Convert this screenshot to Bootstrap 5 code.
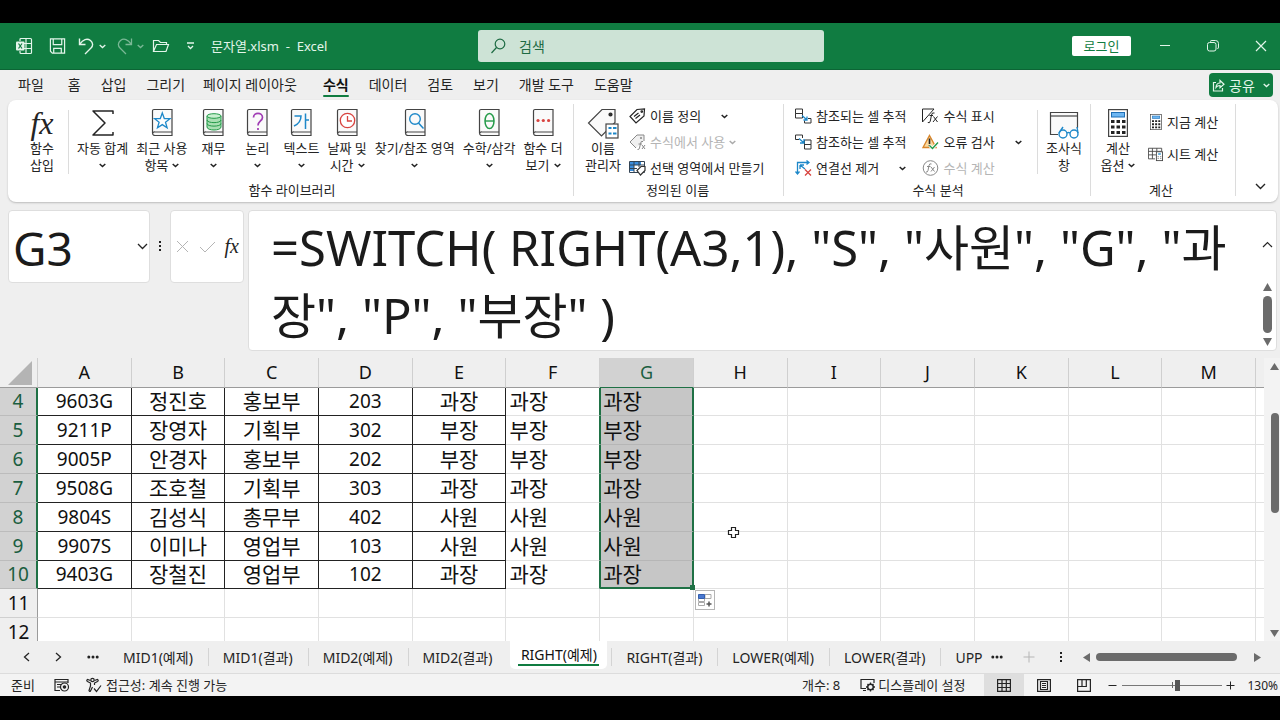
<!DOCTYPE html>
<html lang="ko">
<head>
<meta charset="utf-8">
<meta name="viewport" content="width=device-width, initial-scale=1">
<title>문자열.xlsm - Excel</title>
<link href="https://cdn.jsdelivr.net/npm/bootstrap@5.3.0/dist/css/bootstrap.min.css" rel="stylesheet">
<style>
  :root { --xl: #107c41; --ink: #242424; --chrome: #efefef; --line: #e1e1e1; }
  body { font-family: "Noto Sans", "Noto Sans CJK KR", sans-serif; font-size: 13px; line-height: 17px; color: var(--ink); background: #000; padding: 23px 0 24px; height: 100vh; overflow: hidden; }
  button { color: inherit; background: none; border: 0; padding: 0; }
  svg { display: block; flex: none; fill: none; stroke: currentColor; }
  .app { background: var(--chrome); }
  .fx { font-family: "Liberation Serif", serif; font-style: italic; }
  .fx-big { font-size: 32px; }
  .fx-mid { font-size: 20px; }

  /* title bar */
  .titlebar { display: grid; grid-template-columns: 478fr 346fr 456fr; height: 47px; background: var(--xl); color: #e3f5ea; border-bottom: 1px solid #0c6535; }
  .quick { padding-left: 16px; }
  .quick .chev, .share .chev { stroke: #e3f5ea; stroke-width: 1.3; }
  .undo { margin-left: 12px; }
  .redo { margin-left: 10px; }
  .searchbox { height: 32px; background: #cde3d6; color: #1d6b43; border-radius: 3px; padding: 0 13px; gap: 13px; }
  .searchbox input { background: none; border: 0; outline: 0; padding: 0; width: 100%; color: inherit; font-size: 14px; }
  .searchbox input::placeholder { color: #1d6b43; opacity: 1; }
  .winctl { padding-right: 13px; gap: 36px; }
  .login { background: #fff; color: var(--xl); width: 59px; height: 20px; border-radius: 2px; margin-right: -8px; }

  /* ribbon */
  .menu { height: 30px; padding: 0 7px 0 8px; font-size: 14px; }
  .menu a { color: var(--ink); text-decoration: none; padding: 6px 10px 0; line-height: 17px; }
  .menu a.active { font-weight: 700; color: #111; }
  .menu a.active::after { content: ""; display: block; height: 2px; margin-top: 2px; background: var(--xl); border-radius: 1px; }
  .share { background: var(--xl); color: #e3f5ea; height: 24px; width: 64px; border-radius: 4px; gap: 4px; margin-top: 3px; }
  .ribbon { margin: 0 2px 0 8px; height: 102px; background: #fff; border-radius: 8px; box-shadow: 0 1px 2px #bbb; }
  .rgroup { position: relative; padding-top: 6px; }
  .rgroup + .rgroup::before, .vend::before { content: ""; position: absolute; left: 0; top: 4px; bottom: 6px; width: 1px; background: #dcdcdc; }
  .g-lib { width: 565px; padding-left: 12px; }
  .g-names { width: 210px; padding-left: 8px; }
  .g-audit { width: 307px; padding-left: 12px; }
  .g-calc { width: 145px; padding-left: 6px; }
  .rlabel { text-align: center; height: 24px; line-height: 24px; margin-top: auto; padding-right: 9px; }
  .big { display: flex; flex-direction: column; align-items: center; min-width: 44px; padding: 0 4px; white-space: nowrap; height: 68px; }
  .big .pic { height: 35px; display: flex; align-items: center; }
  .big .ch { height: 17px; display: flex; align-items: center; }
  .stack { margin: -3px 0 -7px; }
  .small-row { display: flex; align-items: center; gap: 4px; height: 26px; white-space: nowrap; }
  .small-row.tall { height: 32px; }
  .off { color: #b5b5b5; }
  .vsep { width: 1px; height: 64px; margin-top: 4px; background: #dcdcdc; }
  .chev { width: 7px; height: 5px; stroke: #222; stroke-width: 1.5; }
  .off .chev { stroke: #aaa; }

  /* formula bar */
  .fbar { padding: 8px 3px 7px 8px; }
  .fpane { background: #fff; border: 1px solid #dedede; border-radius: 4px; }
  .namebox { width: 142px; height: 73px; padding-left: 4px; }
  .namebox input { width: 120px; border: 0; outline: 0; padding: 3px 0 0; font-size: 46px; color: #1b1b1b; background: none; }
  .fbtns { width: 74px; height: 73px; }
  .formula { height: 141px; }
  .formula textarea { flex: 1; border: 0; outline: 0; resize: none; overflow: hidden; padding: 2px 0 0 22px; font-size: 49px; line-height: 68px; color: #1b1b1b; background: none; }
  .fscroll { width: 17px; }
  .fscroll .thumb { width: 9px; height: 37px; margin: 5px 0; }
  .thumb { background: #6b6b6b; border-radius: 5px; }
  .arr { fill: #6b6b6b; stroke: none; }
  .dots { fill: #222; stroke: none; }

  /* sheet */
  .sheet { flex: 1; min-height: 0; overflow: hidden; }
  .cells { table-layout: fixed; width: 100%; border-collapse: separate; border-spacing: 0; font-size: 21px; line-height: 27px; color: #111; }
  .cells th, .cells td { padding: 0; height: 29px; white-space: nowrap; font-weight: 400; background: #fff; border-right: 1px solid var(--line); border-bottom: 1px solid var(--line); }
  .cells thead th { height: 30px; background: var(--chrome); border-right-color: #cfcfcf; border-bottom-color: #9b9b9b; text-align: center; font-size: 18px; }
  .cells tbody th { background: var(--chrome); border-bottom-color: #d0d0d0; border-right-color: #9b9b9b; text-align: center; font-size: 19px; }
  .cells .short > * { height: 28px; }
  .cells tbody th.on { background: #d2d2d2; color: #1b5e3f; border-right: 2px solid #1f7145; border-bottom-color: #bcbcbc; }
  .cells thead th.on { background: #d2d2d2; color: #1b5e3f; border-bottom: 1px solid #1f7145; }
  .cells td.bx { border-color: #222; text-align: center; }
  .cells td.num { font-size: 19px; }
  .cells td.lf { padding-left: 3px; }
  .cells td.pre { border-right-color: #1f7145; }
  .cells td.sel { background: #c6c6c6; border-right: 2px solid #1f7145; border-bottom-color: #b6b6b6; border-left: 1px solid #1f7145; padding-left: 2px; }
  .cells td.last { border-bottom: 2px solid #1f7145; line-height: 26px; }
  .cells td.bare { border-right: 0; }
  .corner { fill: #b4b4b4; stroke: none; }
  .knob { position: absolute; right: -3px; bottom: -3px; width: 5px; height: 5px; background: #1f7145; }
  .autofill { position: absolute; left: 100%; top: 100%; margin: 3px 0 0 3px; width: 20px; height: 20px; background: #fff; border: 1px solid #b5b5b5; z-index: 2; }
  .pointer { position: absolute; left: 33px; top: -6px; z-index: 2; }
  .vscroll { flex: none; width: 16px; background: #f3f3f3; padding: 5px 1px 4px 0; }
  .vscroll .thumb { width: 8px; height: 100px; margin-top: 43px; }

  /* sheet tabs, status bar */
  .tabs { height: 32px; font-size: 14px; }
  .tabnav { width: 108px; padding-left: 23px; gap: 25px; }
  .tabs .tab { color: var(--ink); text-decoration: none; padding: 7px 15px 0; white-space: nowrap; position: relative; line-height: 19px; }
  .tabs .tab + .tab::before { content: ""; position: absolute; left: 0; top: 7px; height: 18px; width: 1px; background: #d4d4d4; }
  .tabs .tab.active { background: #fff; height: 28px; min-width: 97px; text-align: center; border-radius: 0 0 5px 5px; padding: 4px 8px 0; margin: 0 4px 0 3px; color: #111; }
  .tabs .tab.active::before { display: none; }
  .tabs .tab.active::after { content: ""; display: block; height: 2px; background: var(--xl); }
  .newtab { margin: 0 25px 0 20px; }
  .hscroll { width: 178px; margin: 0 19px 0 20px; }
  .hscroll .thumb { height: 8px; margin: 0 17px 0 6px; }
  .status { height: 23px; background: #f3f3f3; border-top: 1px solid #dcdcdc; }
  .state { margin: 0 19px 0 11px; }
  .macro { margin-right: 16px; }
  .display { margin: 0 19px 0 20px; gap: 3px; }
  .view { width: 40px; height: 22px; display: flex; align-items: center; justify-content: center; }
  .view.active { background: #dedede; }
  .zoom { position: relative; width: 100px; height: 22px; }
  .zoom::before { content: ""; position: absolute; left: 50px; top: 8px; width: 1px; height: 6px; background: #666; }
  .zoom input { display: block; width: 100%; height: 22px; margin: 0; appearance: none; -webkit-appearance: none; background: none; }
  .zoom input::-webkit-slider-runnable-track { height: 1px; background: #777; }
  .zoom input::-webkit-slider-thumb { -webkit-appearance: none; width: 5px; height: 11px; margin-top: -5px; background: #555; }
  .zoomout { margin: 0 5px 0 4px; }
  .zoomin { margin: 0 12px 0 4px; }
  .pct { font-size: 12px; margin-right: 2px; }
</style>
</head>
<body>
<svg width="0" height="0" class="position-absolute" aria-hidden="true">
  <symbol id="chev" viewBox="0 0 7 5"><path d="M.7 1l2.800 2.600L6.300 1"/></symbol>
  <symbol id="book" viewBox="0 0 22 30"><path d="M3 1.500h18v26H4a2.500 2.500 0 0 1-2.500-2.500V3A1.500 1.500 0 0 1 3 1.500zM21 24H4a2 2 0 0 0-2.500 1.500" fill="#fafafa" stroke="#444" stroke-width="1.200"/></symbol>
  <symbol id="calc" viewBox="0 0 20 28"><rect x=".6" y=".6" width="18.800" height="26.800" fill="#fff" stroke="#444" stroke-width="1.200"/><rect x="3.500" y="3.500" width="13" height="4.500" fill="#6db6f2" stroke="#1f6fb5"/><path d="M3 12.500h3.500m2 0H12m2 0h3.500M3 18h3.500m2 0H12m2 0h3.500M3 23.500h3.500m2 0H12m2 0h3.500" stroke="#222" stroke-width="3.200"/></symbol>
</svg>

<div class="app d-flex flex-column h-100">
  <header class="titlebar align-items-center">
    <div class="quick d-flex align-items-center">
      <svg width="17" height="18" viewBox="0 0 17 18" stroke-width="1.200"><path d="M4 4V2.500Q4 1.500 5 1.500h9.500q1 0 1 1v13q0 1-1 1H5q-1 0-1-1V14M10 1.500v15M8 6.500h7.500M8 11.500h7.500"/><rect x="0" y="4.500" width="8.500" height="9" rx="1" fill="#e3f5ea" stroke="none"/><path d="M2.500 6.500l3.500 5M6 6.500l-3.500 5" stroke="#107c41"/></svg>
      <button type="button" aria-label="저장" class="ms-3"><svg width="17" height="18" viewBox="0 0 18 18" stroke-width="1.300"><path d="M1.500 1.500h15v15h-13l-2-2zM4.500 1.500v6h9v-6M5 16.500v-5h8v5"/></svg></button>
      <button type="button" aria-label="실행 취소" class="undo d-flex align-items-center gap-1"><svg width="17" height="18" viewBox="0 0 17 18" stroke-width="1.400"><path d="M1.500 1.500v6h6M1.800 7.200C5 2.500 9 .8 12.500 3.500c3 2.500 2.500 5.500.5 7.500l-6 6"/></svg><svg class="chev"><use href="#chev"/></svg></button>
      <button type="button" aria-label="다시 실행" class="redo d-flex align-items-center gap-1 opacity-50"><svg width="17" height="18" viewBox="0 0 17 18" stroke-width="1.300"><path d="M15.500 1.500v6h-6M15.200 7.200C12 2.500 8 .8 4.500 3.500c-3 2.500-2.500 5.500-.5 7.500l6 6"/></svg><svg class="chev"><use href="#chev"/></svg></button>
      <button type="button" aria-label="열기" class="ms-2"><svg width="18" height="14" viewBox="0 0 18 14" stroke-width="1.200"><path d="M1.500 12.500v-11h5l2 2h6v2M1.500 12.500l3-7h12l-2.500 7z"/></svg></button>
      <button type="button" aria-label="빠른 실행 도구 모음" class="ms-3"><svg width="9" height="8" viewBox="0 0 9 8"><path d="M1 1h7M2 4l2.500 2.500L7 4" stroke-width="1.300"/></svg></button>
      <span class="text-nowrap ms-3">문자열.xlsm&nbsp; -&nbsp; Excel</span>
    </div>
    <label class="searchbox d-flex align-items-center">
      <svg width="15" height="16" viewBox="0 0 15 16" stroke-width="1.200"><circle cx="9" cy="6" r="4.800"/><path d="M5.500 9.500L.5 15"/></svg>
      <input type="search" placeholder="검색" aria-label="검색">
    </label>
    <div class="winctl d-flex align-items-center justify-content-end">
      <button type="button" class="login">로그인</button>
      <button type="button" aria-label="최소화"><svg width="12" height="12" viewBox="0 0 12 12"><path d="M1 5.500h10"/></svg></button>
      <button type="button" aria-label="이전 크기로"><svg width="12" height="12" viewBox="0 0 12 12"><rect x=".5" y="2.500" width="8.500" height="8.500" rx="2"/><path d="M3 1.500Q4 .5 5 .5h3.500q3 0 3 3V7q0 1-1 2"/></svg></button>
      <button type="button" aria-label="닫기"><svg width="12" height="12" viewBox="0 0 12 12" stroke-width="1.200"><path d="M1 1l10 10M11 1L1 11"/></svg></button>
    </div>
  </header>

  <nav class="menu d-flex align-items-start">
    <a href="#" class="me-1">파일</a><a href="#">홈</a><a href="#">삽입</a><a href="#">그리기</a><a href="#" class="px-2">페이지 레이아웃</a><a href="#" class="active ms-2">수식</a><a href="#">데이터</a><a href="#">검토</a><a href="#">보기</a><a href="#">개발 도구</a><a href="#">도움말</a>
    <button type="button" class="share ms-auto d-flex align-items-center justify-content-center"><svg width="13" height="13" viewBox="0 0 13 13" stroke-width="1.200"><path d="M4 3.500H1.500v8.500h9V9M4 8.500C4 5.500 6 4 8 4V1.500l4 3.800-4 3.500V6.500C6.500 6.500 5 7 4 8.500z"/></svg>공유<svg class="chev ms-1"><use href="#chev"/></svg></button>
  </nav>

  <section class="ribbon d-flex" aria-label="수식">
    <div class="rgroup g-lib d-flex flex-column">
      <div class="d-flex">
        <button type="button" class="big"><span class="pic fx fx-big">fx</span><span>함수<br>삽입</span></button>
        <span class="vsep ms-1"></span>
        <button type="button" class="big ms-1"><span class="pic"><svg width="22" height="26" viewBox="0 0 22 26" stroke-width="1.500"><path d="M21 4V1H1l12 12L1 25h20v-3" stroke-linejoin="round"/></svg></span><span>자동 합계</span><span class="ch"><svg class="chev"><use href="#chev"/></svg></span></button>
        <button type="button" class="big"><span class="pic"><svg width="22" height="30"><use href="#book"/><path d="M11.300 5l2 5.500 5.700.2-4.500 3.500 1.600 5.600-4.800-3.200-4.800 3.200 1.600-5.600-4.500-3.500 5.700-.2z" stroke="#1e88c9" stroke-width="1.300" fill="#fff"/></svg></span><span>최근 사용</span><span class="d-flex align-items-center gap-1">항목 <svg class="chev"><use href="#chev"/></svg></span></button>
        <button type="button" class="big"><span class="pic"><svg width="22" height="30"><use href="#book"/><path d="M5 8v11c0 4 14 4 14 0V8" fill="#a9dfb3" stroke="#239a48"/><ellipse cx="12" cy="8" rx="7" ry="2.300" fill="#c9efcf" stroke="#239a48"/><path d="M5 12c0 3.500 14 3.500 14 0M5 15.500c0 3.500 14 3.500 14 0" stroke="#239a48"/></svg></span><span>재무</span><span class="ch"><svg class="chev"><use href="#chev"/></svg></span></button>
        <button type="button" class="big"><span class="pic"><svg width="22" height="30"><use href="#book"/><path d="M7.500 9.500c0-5.500 9-5.500 9 0 0 3.500-4.500 3.500-4.500 8m0 2.500v2" stroke="#a03cb4" stroke-width="1.700"/></svg></span><span>논리</span><span class="ch"><svg class="chev"><use href="#chev"/></svg></span></button>
        <button type="button" class="big"><span class="pic"><svg width="22" height="30"><use href="#book"/><path d="M4.500 8H11c0 5-2.500 8-7 10M15.500 5.500V21M15.500 12H19" stroke="#1e88c9" stroke-width="1.500"/></svg></span><span>텍스트</span><span class="ch"><svg class="chev"><use href="#chev"/></svg></span></button>
        <button type="button" class="big"><span class="pic"><svg width="22" height="30"><use href="#book"/><circle cx="11.500" cy="12.500" r="7.200" stroke="#d8433f" stroke-width="1.300" fill="#fff"/><path d="M11.500 8v5H16" stroke="#d8433f" stroke-width="1.300"/></svg></span><span>날짜 및</span><span class="d-flex align-items-center gap-1">시간 <svg class="chev"><use href="#chev"/></svg></span></button>
        <button type="button" class="big"><span class="pic"><svg width="22" height="30"><use href="#book"/><circle cx="11" cy="11" r="5.300" stroke="#1e88c9" stroke-width="1.400"/><path d="M14.500 15l5 5.500" stroke="#1e88c9" stroke-width="1.500"/></svg></span><span>찾기/참조 영역</span><span class="ch"><svg class="chev"><use href="#chev"/></svg></span></button>
        <button type="button" class="big"><span class="pic"><svg width="22" height="30"><use href="#book"/><ellipse cx="11.500" cy="13" rx="4.500" ry="7.500" stroke="#239a48" stroke-width="1.500"/><path d="M7 13h9" stroke="#239a48" stroke-width="1.400"/></svg></span><span>수학/삼각</span><span class="ch"><svg class="chev"><use href="#chev"/></svg></span></button>
        <button type="button" class="big"><span class="pic"><svg width="22" height="30"><use href="#book"/><g fill="#d8433f" stroke="none"><circle cx="6" cy="12.500" r="1.600"/><circle cx="11.300" cy="12.500" r="1.600"/><circle cx="16.600" cy="12.500" r="1.600"/></g></svg></span><span>함수 더</span><span class="d-flex align-items-center gap-1">보기 <svg class="chev"><use href="#chev"/></svg></span></button>
      </div>
      <div class="rlabel">함수 라이브러리</div>
    </div>

    <div class="rgroup g-names d-flex flex-column">
      <div class="d-flex">
        <button type="button" class="big"><span class="pic"><svg width="32" height="32" viewBox="0 0 32 32" stroke-width="1.200"><path d="M15 2.500h13v13L14.500 29 1.500 16z" fill="#fafafa" stroke="#444"/><circle cx="23.500" cy="7.500" r="1.500" fill="#333"/><rect x="19" y="17" width="12" height="14" fill="#fff" stroke="#444"/><path d="M21.500 21h3m1.500 0h3.500m-8 5.500h3m1.500 0h3.500" stroke="#1e88c9" stroke-width="2"/></svg></span><span>이름<br>관리자</span></button>
        <div class="stack ms-1">
          <button type="button" class="small-row"><svg width="17" height="16" viewBox="0 0 17 16" stroke-width="1.200"><path d="M8 1.500l7.500-.5-.5 7-8 7-6-6.500z"/><circle cx="12.800" cy="3.600" r=".8"/><path d="M5 8.500L9.500 5M6.500 10.500L11 7"/></svg>이름 정의<svg class="chev ms-3"><use href="#chev"/></svg></button>
          <button type="button" class="small-row off" disabled><svg width="17" height="16" viewBox="0 0 17 16"><g stroke="#888"><path d="M15 7V1H8L1 8l6 6" fill="#f0f0f0"/><circle cx="12" cy="4" r=".7"/><path d="M14 7.500q-2-1-2.500 2L10.500 14q-.5 2-2 1.500M9.500 10H13M13 11l3 4M16 11l-3 4"/></g></svg>수식에서 사용<svg class="chev"><use href="#chev"/></svg></button>
          <button type="button" class="small-row"><svg width="17" height="16" viewBox="0 0 17 16"><path d="M1 2h11v9H1z" fill="#3b8ede" stroke="none"/><path d="M5 5h11v6H5z" fill="#fff" stroke="none"/><path d="M.5 1.500h15v11H.5zM.5 5h15M.5 8.500H8M5 1.500v11M10 1.500V7" stroke="#345"/><path d="M8 10.500l4-4h4v4l-4.500 4.500z" fill="#fff" stroke="#333" stroke-width="1.200"/></svg>선택 영역에서 만들기</button>
        </div>
      </div>
      <div class="rlabel">정의된 이름</div>
    </div>

    <div class="rgroup g-audit d-flex flex-column">
      <div class="d-flex">
        <div class="stack">
          <button type="button" class="small-row"><svg width="17" height="16" viewBox="0 0 17 16"><path d="M.5 1h7v4.500h-7zM.5 5.500h7V10h-7zM9.500 15H16v-4.500h-3M9.500 15v-2.500" stroke="#333"/><path d="M7 7.500l4.500 4M12 8.500v3.500H8.500" stroke="#1e88c9" stroke-width="1.300"/></svg>참조되는 셀 추적</button>
          <button type="button" class="small-row"><svg width="17" height="16" viewBox="0 0 17 16"><path d="M.5 5.500V1h7v3M.5 5.500H4M9.500 6H16v4.500H9.500zM9.500 10.500V15H16v-4.500M9.500 6V15" stroke="#333"/><path d="M4 4.500l4.500 4M9 5v4H5" stroke="#1e88c9" stroke-width="1.300"/></svg>참조하는 셀 추적</button>
          <button type="button" class="small-row"><svg width="17" height="16" viewBox="0 0 17 16" stroke-width="1.300"><path d="M2.500 14V2.500H14M11.500.5l2.500 2-2.500 2M.5 11.500l2 2.500 2-2.500M5 5h4M5 5v4M5 5l5 4" stroke="#1e88c9"/><path d="M10 9.500l6 6M16 9.500l-6 6" stroke="#d8433f"/></svg>연결선 제거<svg class="chev ms-3"><use href="#chev"/></svg></button>
        </div>
        <div class="stack ms-3">
          <button type="button" class="small-row"><svg width="17" height="16" viewBox="0 0 17 16"><path d="M6 1H.5v13L12 1H6M12.500 5q-2.500-1-3 2l-1.200 6q-.5 2.500-2.500 1.500M7.500 7.500H11M11.500 8.500l4 5.500M15.500 8.500l-4.500 5.500"/></svg>수식 표시</button>
          <button type="button" class="small-row"><svg width="17" height="16" viewBox="0 0 17 16"><path d="M7.500 1.500L14 13.500H1z" fill="#f9d9a0" stroke="#d9862b" stroke-width="1.400"/><path d="M7.500 4.500v5.500M7.500 11v1.500" stroke="#222" stroke-width="1.600"/><path d="M7.500 11.500l3 3L16 8.500" stroke="#fff" stroke-width="3"/><path d="M7.500 11.500l3 3L16 8.500" stroke="#239a48" stroke-width="1.400"/></svg>오류 검사<svg class="chev ms-3"><use href="#chev"/></svg></button>
          <button type="button" class="small-row off" disabled><svg width="17" height="16" viewBox="0 0 17 16"><g stroke="#888"><circle cx="8.500" cy="8" r="7.300"/><path d="M9.500 4q-2-1-2.500 1.500L6 10.500q-.5 2-2 1.500M5 6.500h3.500M9 7l3.500 4.500M12.500 7L9 11.500"/></g></svg>수식 계산</button>
        </div>
        <span class="vsep ms-auto"></span>
        <button type="button" class="big mx-1"><span class="pic pt-1"><svg width="31" height="29" viewBox="0 0 31 29" stroke-width="1.200"><path d="M9 23.500H1.500v-22h27V17" fill="#fafafa" stroke="#444"/><path d="M1.500 5h27" stroke="#444"/><g stroke="#1e88c9" stroke-width="1.400"><circle cx="14" cy="23" r="4"/><circle cx="25" cy="23" r="4"/><path d="M18 22q1.500-1 3 0M10 22l4-6M29 22l-1-6"/></g></svg></span><span>조사식<br>창</span></button>
      </div>
      <div class="rlabel">수식 분석</div>
    </div>

    <div class="rgroup g-calc d-flex flex-column">
      <div class="d-flex">
        <button type="button" class="big"><span class="pic"><svg width="20" height="28"><use href="#calc"/></svg></span><span>계산</span><span class="d-flex align-items-center gap-1">옵션 <svg class="chev"><use href="#chev"/></svg></span></button>
        <div class="ps-2">
          <button type="button" class="small-row tall"><svg width="15" height="16"><use href="#calc" x="2" width="12" height="16"/></svg>지금 계산</button>
          <button type="button" class="small-row tall"><svg width="15" height="16" viewBox="0 0 17 16"><g stroke="#444"><path d="M8 13.500H.5v-12h15V5M.5 5h15M.5 9H9M5 1.500v12M10 1.500V5"/><rect x="9.500" y="5.500" width="7" height="10" fill="#fff"/><path d="M11.500 8h3" stroke="#1e88c9" stroke-width="1.500"/><path d="M11 11h1m2 0h1m-4 2h1m2 0h1"/></g></svg>시트 계산</button>
        </div>
      </div>
      <div class="rlabel">계산</div>
    </div>
    <div class="vend position-relative flex-fill d-flex align-items-end justify-content-end pb-2 pe-2">
      <button type="button" aria-label="리본 축소" class="me-1 mb-1"><svg width="11" height="7" viewBox="0 0 11 7" stroke-width="1.400"><path d="M1 1l4.500 4.500L10 1"/></svg></button>
    </div>
  </section>

  <section class="fbar d-flex align-items-start">
    <div class="fpane namebox d-flex align-items-center">
      <input type="text" value="G3" aria-label="이름 상자">
      <button type="button" aria-label="이름 목록" class="ms-1"><svg width="11" height="7" viewBox="0 0 11 7" stroke-width="1.300"><path d="M1 1l4.500 4.500L10 1"/></svg></button>
    </div>
    <svg class="dots" width="20" height="73" viewBox="0 0 20 73"><rect x="9" y="31" width="2" height="2"/><rect x="9" y="35" width="2" height="2"/><rect x="9" y="39" width="2" height="2"/></svg>
    <div class="fpane fbtns d-flex align-items-center justify-content-between px-1">
      <button type="button" aria-label="취소" class="off"><svg width="15" height="15" viewBox="0 0 15 15"><path d="M2 2l11 11M13 2L2 13"/></svg></button>
      <button type="button" aria-label="입력" class="off"><svg width="17" height="14" viewBox="0 0 17 14"><path d="M1 7l5 5L16 2"/></svg></button>
      <button type="button" class="fx fx-mid">fx</button>
    </div>
    <div class="fpane formula flex-fill d-flex ms-1">
      <textarea aria-label="수식 입력줄" spellcheck="false">=SWITCH( RIGHT(A3,1), "S", "사원", "G", "과장", "P", "부장" )</textarea>
      <div class="fscroll d-flex flex-column align-items-center">
        <svg class="mt-4" width="11" height="19" viewBox="0 -6 11 19" stroke-width="1.200"><path d="M1 6l4.500-4.500L10 6"/></svg>
        <svg class="arr mt-auto" width="9" height="8" viewBox="0 0 9 8"><path d="M4.500 0L9 8H0z"/></svg>
        <div class="thumb"></div>
        <svg class="arr mb-1" width="9" height="8" viewBox="0 0 9 8"><path d="M4.500 8L9 0H0z"/></svg>
      </div>
    </div>
  </section>

  <main class="sheet d-flex">
    <div class="flex-fill overflow-hidden">
      <table class="cells">
        <colgroup><col style="width:38px"><col span="13"><col style="width:8px"></colgroup>
        <thead><tr><th><svg width="26" height="26" viewBox="0 0 26 26" class="corner ms-auto me-1"><path d="M25 1v24H1z"/></svg></th><th>A</th><th>B</th><th>C</th><th>D</th><th>E</th><th>F</th><th class="on">G</th><th>H</th><th>I</th><th>J</th><th>K</th><th>L</th><th>M</th><th class="border-end-0"></th></tr></thead>
        <tbody id="rows"></tbody>
      </table>
    </div>
    <div class="vscroll d-flex flex-column align-items-end">
      <svg class="arr" width="9" height="7" viewBox="0 0 9 7"><path d="M4.500 0L9 7H0z"/></svg>
      <div class="thumb"></div>
      <svg class="arr mt-auto" width="9" height="7" viewBox="0 0 9 7"><path d="M4.500 7L9 0H0z"/></svg>
    </div>
  </main>

  <nav class="tabs d-flex align-items-start">
    <div class="tabnav d-flex align-items-center h-100">
      <button type="button" aria-label="이전 시트"><svg width="7" height="10" viewBox="0 0 7 10" stroke-width="1.300"><path d="M6 1L1.500 5 6 9"/></svg></button>
      <button type="button" aria-label="다음 시트"><svg width="7" height="10" viewBox="0 0 7 10" stroke-width="1.300"><path d="M1 1l4.500 4L1 9"/></svg></button>
      <button type="button" aria-label="시트 더 보기"><svg class="dots" width="12" height="4" viewBox="0 0 12 4"><circle cx="1.800" cy="2" r="1.500"/><circle cx="6" cy="2" r="1.500"/><circle cx="10.200" cy="2" r="1.500"/></svg></button>
    </div>
    <a href="#" class="tab">MID1(예제)</a><a href="#" class="tab">MID1(결과)</a><a href="#" class="tab">MID2(예제)</a><a href="#" class="tab">MID2(결과)</a><a href="#" class="tab active">RIGHT(예제)</a><a href="#" class="tab">RIGHT(결과)</a><a href="#" class="tab">LOWER(예제)</a><a href="#" class="tab">LOWER(결과)</a><a href="#" class="tab pe-0">UPP</a>
    <div class="d-flex align-items-center ms-auto h-100">
      <button type="button" aria-label="시트 목록"><svg class="dots" width="12" height="4" viewBox="0 0 12 4"><circle cx="1.800" cy="2" r="1.500"/><circle cx="6" cy="2" r="1.500"/><circle cx="10.200" cy="2" r="1.500"/></svg></button>
      <button type="button" aria-label="새 시트" class="newtab off"><svg width="12" height="12" viewBox="0 0 12 12"><path d="M6 .5v11M.5 6h11"/></svg></button>
      <svg class="dots" width="3" height="11" viewBox="0 0 3 11"><rect width="2" height="2"/><rect y="4" width="2" height="2"/><rect y="8" width="2" height="2"/></svg>
      <div class="hscroll d-flex align-items-center">
        <svg class="arr" width="7" height="9" viewBox="0 0 7 9"><path d="M0 4.500L7 0v9z"/></svg>
        <div class="thumb flex-fill"></div>
        <svg class="arr" width="7" height="9" viewBox="0 0 7 9"><path d="M7 4.500L0 0v9z"/></svg>
      </div>
    </div>
  </nav>

  <footer class="status d-flex align-items-center">
    <span class="state">준비</span>
    <svg class="macro" width="16" height="14" viewBox="0 0 16 14" stroke-width="1.200"><path d="M6 12.500H1v-11h13V5M1 4h13M3 6.500h4M3 9h3"/><circle cx="10.500" cy="9" r="4"/><circle cx="10.500" cy="9" r="1.200" fill="currentColor"/></svg>
    <svg width="16" height="16" viewBox="0 0 16 16" stroke-width="1.200"><circle cx="6.500" cy="3" r="1.700"/><path d="M4.500 3.500L1.500 2.500q-1.500 1 0 2L4.500 6v3L3 13.500q.5 1.500 1.500.5l2-4M8.500 3.500l3-1q1.500 1 0 2L8.500 6v2M8 11.500l2.500 3 4.500-6"/></svg>
    <span class="ms-1">접근성: 계속 진행 가능</span>
    <span class="ms-auto">개수: 8</span>
    <button type="button" class="display d-flex align-items-center"><svg width="15" height="14" viewBox="0 0 15 14" stroke-width="1.200"><path d="M6 10.500H1v-9h13V5M3 12.500h3"/><circle cx="10.500" cy="9" r="2.800" stroke-width="1.500"/><path d="M10.500 4.500v2m0 5v2M6 9h2m5 0h2M7.500 6l1.200 1.200m3.600 3.600l1.200 1.200M13.500 6l-1.200 1.200m-3.600 3.600L7.500 12" stroke-width="1.300"/></svg>디스플레이 설정</button>
    <button type="button" class="view active" aria-label="기본"><svg width="14" height="13" viewBox="0 0 14 13" stroke-width="1.200"><path d="M.6.600h12.800v11.800H.6zM.6 4.500h12.800M.6 8.500h12.800M5 .6v12M9.300.6v12"/></svg></button>
    <button type="button" class="view" aria-label="페이지 레이아웃"><svg width="14" height="13" viewBox="0 0 14 13" stroke-width="1.200"><path d="M.6.600h12.800v11.800H.6zM3.500 2.500h7v8h-7zM5 4.500h4M5 6.500h4M5 8.500h4"/></svg></button>
    <button type="button" class="view" aria-label="페이지 나누기 미리 보기"><svg width="14" height="13" viewBox="0 0 14 13" stroke-width="1.200"><path d="M.6.600h12.800v11.800H.6zM.6 7.500h8.700v-7M5 .6v7"/></svg></button>
    <button type="button" aria-label="축소" class="zoomout"><svg width="9" height="9" viewBox="0 0 9 9"><path d="M.5 4.500h8"/></svg></button>
    <label class="zoom"><input type="range" min="0" max="100" value="55" aria-label="확대/축소"></label>
    <button type="button" aria-label="확대" class="zoomin"><svg width="9" height="9" viewBox="0 0 9 9"><path d="M.5 4.500h8M4.500.5v8"/></svg></button>
    <span class="pct">130%</span>
  </footer>
</div>

<script>
  const staff = [
    ["9603G", "정진호", "홍보부", 203, "과장"],
    ["9211P", "장영자", "기획부", 302, "부장"],
    ["9005P", "안경자", "홍보부", 202, "부장"],
    ["9508G", "조호철", "기획부", 303, "과장"],
    ["9804S", "김성식", "총무부", 402, "사원"],
    ["9907S", "이미나", "영업부", 103, "사원"],
    ["9403G", "장철진", "영업부", 102, "과장"]
  ];
  const fill = n => "<td></td>".repeat(n) + '<td class="bare"></td>';
  const extras = '<span class="knob"></span><button type="button" class="autofill" aria-label="자동 채우기 옵션"><svg width="18" height="18" viewBox="0 0 18 18"><path d="M2.500 7.500h6v3h-6zM2.500 11.500h6v3h-6zM9 3.500h6v4H9z" stroke="#aaa"/><path d="M2.500 3.500h6v4h-6z" fill="#4a78d0" stroke="#335fae"/><path d="M13 10.500v5M10.500 13h5" stroke="#555" stroke-width="1.500"/></svg></button>';
  const pointer = '<svg class="pointer" width="13" height="13" viewBox="0 0 13 13"><path d="M4.500 1.500h4v3h3v4h-3v3h-4v-3h-3v-4h3z" fill="#fff" stroke="#222" stroke-width="1.200"/></svg>';
  let html = "";
  staff.forEach((r, i) => {
    const last = i === staff.length - 1;
    html += `<tr class="${i === 0 || last ? "short" : ""}"><th class="on">${i + 4}</th>`
      + r.map((v, c) => `<td class="bx ${c % 3 ? "" : "num"}">${v}</td>`).join("")
      + `<td class="lf pre">${r[4]}</td><td class="lf sel ${last ? "last position-relative" : ""}">${r[4]}${last ? extras : ""}</td>`
      + (i === 5 ? `<td class="position-relative">${pointer}</td>` + fill(5) : fill(6)) + "</tr>";
  });
  [11, 12].forEach(n => { html += `<tr><th>${n}</th>${fill(13)}</tr>`; });
  document.getElementById("rows").innerHTML = html;
</script>
<script src="https://cdn.jsdelivr.net/npm/bootstrap@5.3.0/dist/js/bootstrap.bundle.min.js"></script>
</body>
</html>
